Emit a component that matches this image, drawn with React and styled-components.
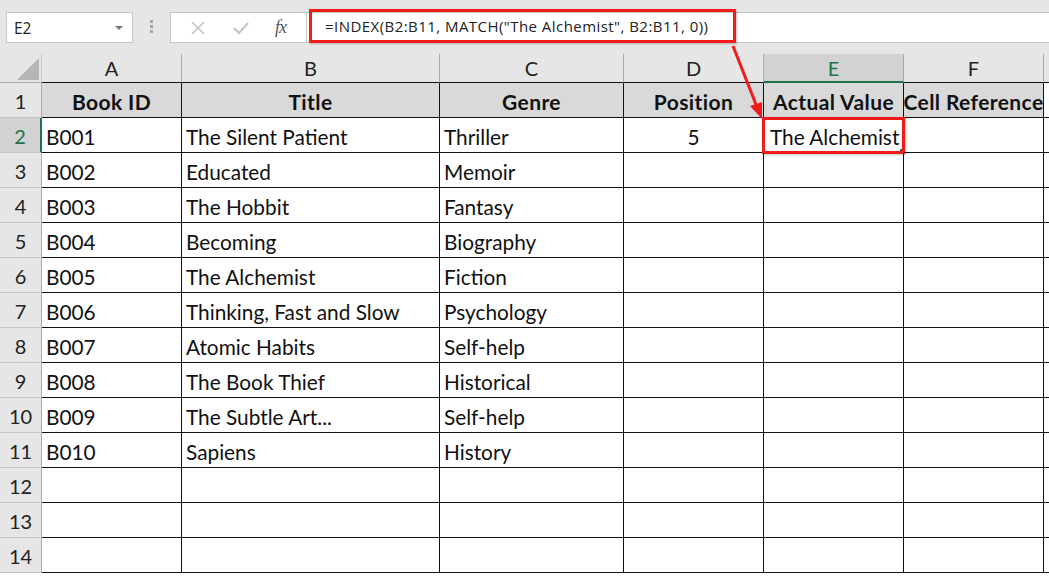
import React from "react";
import styled, { createGlobalStyle, css } from "styled-components";

const GlobalStyle = createGlobalStyle`
  html, body {
    margin: 0;
    padding: 0;
    background: #ffffff;
    overflow: hidden;
  }
  * {
    box-sizing: border-box;
  }
`;

const COLUMNS = ["A", "B", "C", "D", "E", "F", ""];
const HEADERS = ["Book ID", "Title", "Genre", "Position", "Actual Value", "Cell Reference"];
const ROWS = [
  ["B001", "The Silent Patient", "Thriller", "5", "The Alchemist", ""],
  ["B002", "Educated", "Memoir"],
  ["B003", "The Hobbit", "Fantasy"],
  ["B004", "Becoming", "Biography"],
  ["B005", "The Alchemist", "Fiction"],
  ["B006", "Thinking, Fast and Slow", "Psychology"],
  ["B007", "Atomic Habits", "Self-help"],
  ["B008", "The Book Thief", "Historical"],
  ["B009", "The Subtle Art...", "Self-help"],
  ["B010", "Sapiens", "History"],
  [],
  [],
  [],
];
const FORMULA = '=INDEX(B2:B11, MATCH("The Alchemist", B2:B11, 0))';

export default function App() {
  return (
    <Page>
      <GlobalStyle />
      <Toolbar>
        <NameBox>
          <span>E2</span>
          <Caret />
        </NameBox>
        <Grip>
          <i />
          <i />
          <i />
        </Grip>
        <FuncBox>
          <svg width="18" height="18" viewBox="0 0 18 18">
            <path d="M3 3 L15 15 M15 3 L3 15" stroke="#c4c4c4" strokeWidth="1.6" fill="none" />
          </svg>
          <svg width="20" height="18" viewBox="0 0 20 18">
            <path d="M3 9 L8 14 L17 4" stroke="#c4c4c4" strokeWidth="2.2" fill="none" />
          </svg>
          <Fx>fx</Fx>
        </FuncBox>
        <FormulaBar>
          <FormulaHighlight>{FORMULA}</FormulaHighlight>
        </FormulaBar>
      </Toolbar>

      <Sheet>
        <Corner>
          <svg width="42" height="29" viewBox="0 0 42 29">
            <polygon points="39,4 39,26 17,26" fill="#b5b5b5" />
          </svg>
        </Corner>
        {COLUMNS.map((c, i) => (
          <ColHead key={"h" + i} $active={c === "E"}>
            {c}
          </ColHead>
        ))}

        <RowHead>1</RowHead>
        {HEADERS.map((h) => (
          <Cell key={h} $header $align="center">
            {h}
          </Cell>
        ))}
        <Cell $header $blank />

        {ROWS.map((r, ri) => {
          const n = ri + 2;
          return (
            <React.Fragment key={n}>
              <RowHead $active={n === 2}>{n}</RowHead>
              {[0, 1, 2, 3, 4, 5].map((ci) => (
                <Cell
                  key={ci}
                  $align={ci === 3 ? "center" : "left"}
                  $selected={n === 2 && ci === 4}
                >
                  {r[ci] || ""}
                </Cell>
              ))}
              <Cell $blank />
            </React.Fragment>
          );
        })}
      </Sheet>

      <Arrow width="1049" height="578" viewBox="0 0 1049 578">
        <line x1="733" y1="46" x2="757" y2="107" stroke="#f21b1b" strokeWidth="3" />
        <polygon points="762,119 750,106 762,102" fill="#f21b1b" />
      </Arrow>
    </Page>
  );
}

const Page = styled.div`
  position: relative;
  width: 1049px;
  height: 578px;
  overflow: hidden;
  background: #ffffff;
  font-family: Lato, "Open Sans", sans-serif;
`;

const Toolbar = styled.div`
  display: flex;
  align-items: flex-start;
  height: 54px;
  padding: 12px 0 0 6px;
  background: #e6e6e6;
`;

const NameBox = styled.div`
  display: flex;
  align-items: center;
  justify-content: space-between;
  width: 127px;
  height: 31px;
  padding: 0 9px 0 7px;
  background: #ffffff;
  border: 1px solid #c6c6c6;
  font-family: "Open Sans", sans-serif;
  font-size: 15.5px;
  color: #222;
`;

const Caret = styled.span`
  width: 0;
  height: 0;
  border-left: 4px solid transparent;
  border-right: 4px solid transparent;
  border-top: 4px solid #777;
`;

const Grip = styled.div`
  display: flex;
  flex-direction: column;
  align-items: center;
  gap: 2px;
  width: 37px;
  padding-top: 8px;

  i {
    width: 3px;
    height: 3px;
    background: #a6a6a6;
  }
`;

const FuncBox = styled.div`
  display: flex;
  align-items: center;
  justify-content: space-around;
  width: 137px;
  height: 31px;
  padding: 0 8px 0 6px;
  background: #ffffff;
  border: 1px solid #c6c6c6;
`;

const Fx = styled.span`
  font-family: "Liberation Serif", serif;
  font-style: italic;
  font-size: 18px;
  color: #555;
  letter-spacing: -1px;
`;

const FormulaBar = styled.div`
  flex: 1;
  display: flex;
  align-items: center;
  height: 31px;
  padding-left: 2px;
  background: #ffffff;
  border-top: 1px solid #c6c6c6;
  border-bottom: 1px solid #c6c6c6;
`;

const FormulaHighlight = styled.div`
  display: flex;
  align-items: center;
  width: 427px;
  height: 34px;
  margin-top: -3px;
  padding-left: 13px;
  border: 3px solid #f21b1b;
  box-shadow: 1px 1px 2px rgba(0, 0, 0, 0.25);
  font-family: "Open Sans", sans-serif;
  font-size: 15px;
  letter-spacing: 0.45px;
  color: #222;
  white-space: nowrap;
`;

const Sheet = styled.div`
  display: grid;
  grid-template-columns: 42px 140px 258px 184px 140px 140px 140px 1fr;
  grid-template-rows: 29px repeat(14, 35px);
`;

const Corner = styled.div`
  background: #e6e6e6;
  border-right: 1px solid #c6c6c6;
  border-bottom: 1px solid #ababab;
`;

const ColHead = styled.div`
  display: flex;
  align-items: center;
  justify-content: center;
  background: #e6e6e6;
  border-right: 1px solid #ababab;
  border-bottom: 1px solid #111;
  font-size: 20px;
  color: #222;
  ${(p) =>
    p.$active &&
    css`
      background: #d2d2d2;
      color: #217346;
      border-bottom: 2px solid #217346;
    `}
`;

const RowHead = styled.div`
  display: flex;
  align-items: center;
  justify-content: center;
  padding-top: 2px;
  background: #e6e6e6;
  border-right: 1px solid #ababab;
  border-bottom: 1px solid #c6c6c6;
  font-size: 20px;
  color: #222;
  ${(p) =>
    p.$active &&
    css`
      background: #d2d2d2;
      color: #217346;
      border-right: 2px solid #217346;
    `}
`;

const Cell = styled.div`
  position: relative;
  display: flex;
  align-items: center;
  justify-content: ${(p) => (p.$align === "center" ? "center" : "flex-start")};
  padding: 2px 4px 0 4px;
  border-right: 1px solid #111;
  border-bottom: 1px solid #111;
  font-size: 20.8px;
  color: #111;
  white-space: nowrap;
  overflow: ${(p) => (p.$selected ? "visible" : "hidden")};
  ${(p) =>
    p.$header &&
    css`
      background: #d9d9d9;
      font-weight: 700;
      font-size: 21px;
      letter-spacing: 0.4px;
      padding: 2px 0 0 0;
    `}
  ${(p) =>
    p.$blank &&
    css`
      background: #ffffff;
      border-right: none;
    `}
  ${(p) =>
    p.$selected &&
    css`
      padding-left: 6px;
      &::before {
        content: "";
        position: absolute;
        right: -2px;
        bottom: -2px;
        width: 5px;
        height: 5px;
        background: #217346;
      }
      &::after {
        content: "";
        position: absolute;
        left: -2px;
        top: -1px;
        right: -2px;
        bottom: -2px;
        border: 3px solid #f21b1b;
        box-shadow: 1px 1px 2px rgba(0, 0, 0, 0.25);
      }
    `}
`;

const Arrow = styled.svg`
  position: absolute;
  left: 0;
  top: 0;
  pointer-events: none;
`;
